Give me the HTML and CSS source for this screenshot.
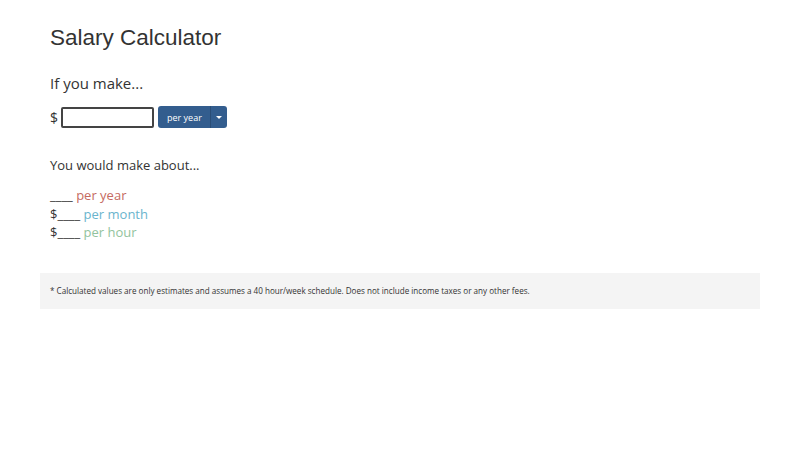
FILE: index.html
```html
<!DOCTYPE html>
<html>
<head>
<meta charset="utf-8">
<link rel="stylesheet" href="styles.css">
</head>
<body>
<div class="container">
  <div class="main">
    <h1 class="title">Salary Calculator</h1>
    <p class="lead">If you make...</p>
    <div class="input-row">
      <span class="dollar">$</span>
      <input class="amount" type="text">
      <div class="btn-group">
        <span class="btn-main">per year</span>
        <span class="btn-caret"><span class="caret"></span></span>
      </div>
    </div>
    <p class="lead lead2">You would make about...</p>
    <div class="results">
      <div class="r r-year">____ <span>per year</span></div>
      <div class="r r-month">$____ <span>per month</span></div>
      <div class="r r-hour">$____ <span>per hour</span></div>
    </div>
  </div>
  <div class="note">* Calculated values are only estimates and assumes a 40 hour/week schedule. Does not include income taxes or any other fees.</div>
</div>
</body>
</html>
```
FILE: styles.css
```css
body {
  margin: 0;
  background: #fff;
  font-family: "Open Sans", sans-serif;
  color: #333;
}
.container {
  width: 720px;
  margin: 0 auto;
}
.main {
  padding: 0 10px;
}
.title {
  font-family: "Liberation Sans", Arial, sans-serif;
  font-weight: normal;
  font-size: 22.5px;
  margin: 0;
  padding-top: 24px;
  line-height: 28px;
  color: #333;
}
.lead {
  font-size: 15px;
  margin: 21px 0 0;
  line-height: 20px;
}
.input-row {
  display: flex;
  align-items: center;
  margin-top: 13px;
  height: 22px;
}
.dollar {
  font-size: 14px;
  margin-right: 3px;
}
.amount {
  width: 89px;
  height: 17px;
  border: 2px solid #444;
  border-radius: 2px;
  padding: 0;
  margin: 0 4px 0 0;
  background: #fff;
}
.btn-group {
  display: flex;
  height: 22px;
  background: #335d8e;
  border-radius: 3px;
  color: #fff;
  font-size: 9px;
}
.btn-main {
  display: flex;
  align-items: center;
  padding: 0 8px 0 9px;
  border-right: 1px solid #2a4d76;
}
.btn-caret {
  display: flex;
  align-items: center;
  justify-content: center;
  width: 16px;
}
.caret {
  width: 0;
  height: 0;
  border-left: 3px solid transparent;
  border-right: 3px solid transparent;
  border-top: 3px solid #fff;
}
.lead2 {
  margin-top: 27px;
  font-size: 13px;
}
.results {
  margin-top: 11px;
  font-size: 13px;
  line-height: 18.5px;
}
.r-year span { color: #c56a61; }
.r-month span { color: #6ab4cd; }
.r-hour span { color: #92c39d; }
.note {
  margin-top: 31px;
  background: #f4f4f4;
  font-size: 8.1px;
  padding: 14px 10px 14px 10px;
  line-height: 8px;
  color: #333;
}
```
